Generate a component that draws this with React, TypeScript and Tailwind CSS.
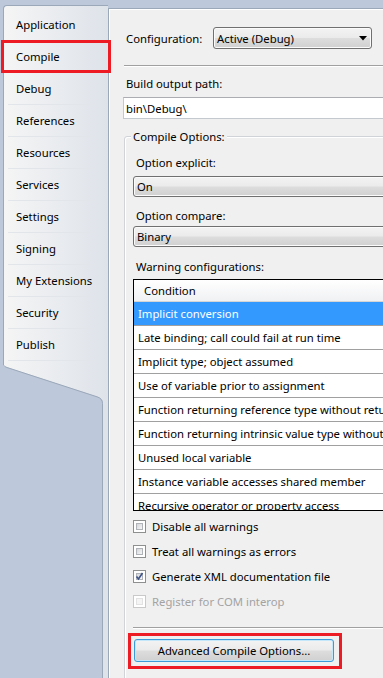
const tabs = [
  "Application",
  "Compile",
  "Debug",
  "References",
  "Resources",
  "Services",
  "Settings",
  "Signing",
  "My Extensions",
  "Security",
  "Publish",
];

const conditions = [
  "Implicit conversion",
  "Late binding; call could fail at run time",
  "Implicit type; object assumed",
  "Use of variable prior to assignment",
  "Function returning reference type without return value",
  "Function returning intrinsic value type without return value",
  "Unused local variable",
  "Instance variable accesses shared member",
  "Recursive operator or property access",
];

const comboBg =
  "bg-[linear-gradient(#f3f3f3_0%,#ebebeb_48%,#dddddd_52%,#d0d0d0_100%)]";

function Combo({ value, width, arrow }: { value: string; width: string; arrow?: boolean }) {
  return (
    <div
      className={`flex h-full ${width} items-center justify-between rounded-[3px] border border-[#707070] pl-[3px] pr-[4px] pt-[2px] shadow-[inset_0_0_0_1px_#fbfbfb] ${comboBg}`}
    >
      <span className="whitespace-nowrap">{value}</span>
      {arrow && (
        <svg width="8" height="5" viewBox="0 0 8 5" className="-mt-[2px] shrink-0">
          <path d="M0 0 H8 L4 4.5 Z" fill="#000" />
        </svg>
      )}
    </div>
  );
}

function Check({
  label,
  checked,
  disabled,
}: {
  label: string;
  checked?: boolean;
  disabled?: boolean;
}) {
  return (
    <div className="flex h-[25px] items-center">
      <span
        className={`relative flex h-[13px] w-[13px] shrink-0 border bg-white p-[2px] ${
          disabled ? "border-[#c9c9c9]" : "border-[#8e8f8f]"
        }`}
      >
        <span
          className={`block h-full w-full border ${
            disabled
              ? "border-[#e2e2e2] bg-[#f4f4f4]"
              : "border-[#b0b4b9] bg-linear-to-br from-[#d4d6d9] to-[#f7f7f7]"
          }`}
        />
        {checked && (
          <svg width="11" height="11" viewBox="0 0 11 11" className="absolute left-[0px] top-[0px]">
            <path d="M2.5 5.5 L4.5 8 L8.5 2" fill="none" stroke="#3c5289" strokeWidth="1.6" />
          </svg>
        )}
      </span>
      <span className={`ml-[6px] mt-[2px] whitespace-nowrap ${disabled ? "text-[#a3a3a3]" : ""}`}>
        {label}
      </span>
    </div>
  );
}

function Etched({ className = "" }: { className?: string }) {
  return <div className={`h-[2px] w-[320px] border-t border-[#a0a0a0] border-b border-b-white ${className}`} />;
}

export default function App() {
  return (
    <div className="relative flex h-[678px] w-[383px] overflow-hidden bg-[#bdc9da] font-['Noto_Sans','DejaVu_Sans',sans-serif] text-[11.3px] text-black">
      {/* side tabs */}
      <div className="flex w-[108px] shrink-0 flex-col pt-[5px]">
        <div className="ml-[3px] h-[360px] w-[105px] rounded-tl-[4px] border-l border-t border-[#9ba8ba] bg-linear-to-r from-[#f5f5f5] to-[#dee3ea] pt-[3px]">
          {tabs.map((t) => (
            <div key={t} className="flex h-[32px] flex-col">
              <div className="flex flex-1 items-center pl-[12px] pt-[2px]">{t}</div>
              <div className="ml-[4px] h-[1px] w-[87px] bg-[#e2e5ea]" />
            </div>
          ))}
        </div>
        <svg width="108" height="40" className="block shrink-0">
          <defs>
            <linearGradient id="tabfill" x1="3" x2="108" y1="0" y2="0" gradientUnits="userSpaceOnUse">
              <stop offset="0" stopColor="#f5f5f5" />
              <stop offset="1" stopColor="#dee3ea" />
            </linearGradient>
          </defs>
          <rect width="108" height="40" fill="#bdc9da" />
          <path d="M3 0 H108 V40 H103 V38 Q103 33 97 31.5 L7 2.2 Q3.5 1.2 3 0 Z" fill="url(#tabfill)" />
          <path
            d="M3.5 0 Q4 1.6 7 2.5 L97 31.8 Q102.5 33.5 102.5 38.5 V40"
            fill="none"
            stroke="#9ba8ba"
          />
        </svg>
        <div className="flex-1 bg-[#dee3ea]">
          <div className="h-full w-[103px] border-r border-[#9ba8ba] bg-[#bdc9da]" />
        </div>
      </div>

      {/* property page */}
      <div className="mt-[8px] min-w-0 flex-1 overflow-hidden border-l border-t border-[#9ba8ba] bg-[#f0f0f0] pl-[14px] shadow-[inset_1px_1px_0_#ffffff]">
        <div className="ml-[3px] mt-[18px] flex h-[22px] items-center">
          <span className="mt-[2px] w-[87px] shrink-0">Configuration:</span>
          <Combo value="Active (Debug)" width="w-[159px]" arrow />
        </div>

        <Etched className="ml-[1px] mt-[16px]" />

        <div className="ml-[3px] mt-[8px] h-[16px] pt-[1px] leading-[16px]">Build output path:</div>
        <div className="mt-[6px] flex h-[22px] w-[320px] items-center border border-[#c4c8cf] border-t-[#abadb3] bg-white pl-[2px] pt-[2px]">
          bin\Debug\
        </div>

        <div className="relative ml-[1px] mt-[17px] w-[320px] rounded-[3px] border border-[#d0d4d9] pb-[40px] pl-[8px] shadow-[inset_1px_1px_0_#ffffff]">
          <span className="absolute -top-[8px] left-[6px] bg-[#f0f0f0] px-[2px] leading-[16px]">
            Compile Options:
          </span>

          <div className="ml-[3px] mt-[17px] h-[16px] pt-[1px] leading-[16px]">Option explicit:</div>
          <div className="mt-[6px] h-[21px]">
            <Combo value="On" width="w-[320px]" />
          </div>

          <div className="ml-[3px] mt-[10px] h-[16px] pt-[1px] leading-[16px]">Option compare:</div>
          <div className="mt-[3px] h-[21px]">
            <Combo value="Binary" width="w-[320px]" />
          </div>

          <div className="ml-[3px] mt-[11px] h-[16px] pt-[1px] leading-[16px]">Warning configurations:</div>
          <div className="mt-[5px] h-[232px] w-[320px] overflow-hidden border border-black bg-white">
            <div className="flex h-[22px] items-center border-b border-[#d5d5d5] bg-linear-to-b from-[#ffffff] to-[#f0f1f3] pl-[10px] pt-[2px]">
              Condition
            </div>
            {conditions.map((c, i) => (
              <div
                key={c}
                className={`flex h-[24px] items-center whitespace-nowrap border-b border-[#a0a0a0] pl-[4px] pt-[2px] ${
                  i === 0 ? "bg-[#3399ff] text-white" : ""
                }`}
              >
                {c}
              </div>
            ))}
          </div>

          <div className="mt-[3px]">
            <Check label="Disable all warnings" />
            <Check label="Treat all warnings as errors" />
            <Check label="Generate XML documentation file" checked />
            <Check label="Register for COM interop" disabled />
          </div>

          <Etched className="mt-[13px]" />

          <button
            className={`ml-[1px] mt-[10px] flex h-[23px] w-[200px] items-center justify-center rounded-[3px] border border-[#3c9bd6] pt-[2px] shadow-[inset_0_0_0_1px_#c4e8fa] ${comboBg}`}
          >
            Advanced Compile Options...
          </button>
        </div>
      </div>

      {/* annotation boxes */}
      <div className="absolute left-[1px] top-[40px] h-[33px] w-[110px] border-[3px] border-[#ed1c24]" />
      <div className="absolute left-[128px] top-[633px] h-[36px] w-[214px] border-[3px] border-[#ed1c24]" />
    </div>
  );
}
